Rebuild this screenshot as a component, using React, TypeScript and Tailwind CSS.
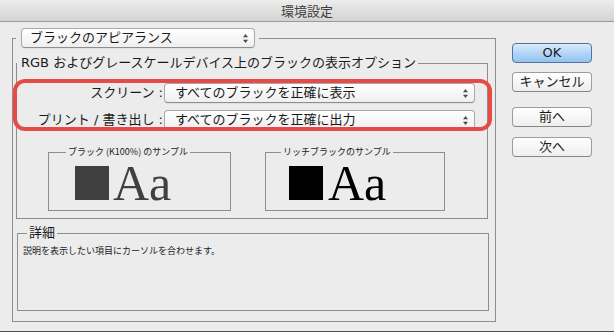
import React from 'react';

function Arrows() {
  return (
    <svg width="7" height="11" viewBox="0 0 7 11" className="shrink-0">
      <path d="M3.5 1 L6 4.2 L1 4.2 Z" fill="#4a4a4a" />
      <path d="M3.5 10 L6 6.8 L1 6.8 Z" fill="#4a4a4a" />
    </svg>
  );
}

function Popup({ label, className }: { label: string; className: string }) {
  return (
    <div
      className={`flex h-[20px] items-center justify-between rounded-[4px] border border-[#a9a9a9] border-b-[#8e8e8e] bg-gradient-to-b from-white to-[#efefef] pr-[5px] text-[13px] leading-[18px] shadow-[0_1px_1px_rgba(0,0,0,0.06)] ${className}`}
    >
      <span>{label}</span>
      <Arrows />
    </div>
  );
}

function Button({ label, primary }: { label: string; primary?: boolean }) {
  return (
    <button
      className={
        primary
          ? 'flex h-[20px] w-[80px] items-center justify-center rounded-[4px] border border-[#56739f] bg-gradient-to-b from-[#dcebfb] via-[#b3d5f6] to-[#92c4f1] text-[13px] leading-[18px]'
          : 'flex h-[20px] w-[80px] items-center justify-center rounded-[4px] border border-[#9d9d9d] border-b-[#868686] bg-gradient-to-b from-white to-[#eeeeee] text-[13px] leading-[18px]'
      }
    >
      {label}
    </button>
  );
}

function Sample({ label, color, width, legendGap, squareGap, textGap }: {
  label: string;
  color: string;
  width: string;
  legendGap: string;
  squareGap: string;
  textGap: string;
}) {
  return (
    <fieldset className={`h-[65px] border border-[#8e8e8e] ${width}`}>
      <legend className={`px-[2px] text-[9px] leading-[12px] font-['Noto_Sans_CJK_JP',sans-serif] ${legendGap}`}>
        {label}
      </legend>
      <div className={`mt-[3px] flex items-baseline ${squareGap}`}>
        <div className={`h-[34px] w-[34px] ${color === 'gray' ? 'bg-[#404040]' : 'bg-black'}`} />
        <span
          className={`font-['Liberation_Serif',serif] text-[50px] leading-[44px] ${textGap} ${color === 'gray' ? 'text-[#404040]' : 'text-black'}`}
        >
          Aa
        </span>
      </div>
    </fieldset>
  );
}

export default function App() {
  return (
    <div className="relative h-[332px] w-[614px] overflow-hidden border-b border-[#4f4f4f] bg-[#ececec] text-[#1a1a1a] font-['DejaVu_Sans','Noto_Sans_CJK_JP',sans-serif]">
      <div className="flex h-[22px] items-center justify-center border-b border-[#9a9a9a] bg-gradient-to-b from-[#ededed] to-[#d3d3d3] text-[13px] text-[#3d3d3d] font-['Noto_Sans_CJK_JP',sans-serif]">
        環境設定
      </div>

      <div className="flex">
        <fieldset className="ml-[12px] mt-[6px] h-[294px] w-[484px] border border-[#8e8e8e] pl-[3px] pt-[6px]">
          <legend className="pl-[5px] pr-[4px]">
            <Popup label="ブラックのアピアランス" className="w-[234px] pl-[8px]" />
          </legend>

          <fieldset className="h-[165px] w-[472px] border border-[#8e8e8e]">
            <legend className="pl-[4px] pr-[2px] text-[13px] leading-[18px]">
              RGB およびグレースケールデバイス上のブラックの表示オプション
            </legend>

            <div className="mt-[11px] flex items-center">
              <span className="w-[146px] text-right text-[13px] leading-[20px]">スクリーン :</span>
              <Popup label="すべてのブラックを正確に表示" className="ml-[1px] w-[311px] pl-[10px]" />
            </div>
            <div className="mt-[7px] flex items-center">
              <span className="w-[146px] text-right text-[13px] leading-[20px]">プリント / 書き出し :</span>
              <Popup label="すべてのブラックを正確に出力" className="ml-[1px] w-[311px] pl-[10px]" />
            </div>

            <div className="ml-[31px] mt-[16px] flex gap-[34px]">
              <Sample
                label="ブラック (K100%) のサンプル"
                color="gray"
                width="w-[183px]"
                legendGap="ml-[17px]"
                squareGap="ml-[26px]"
                textGap="ml-[4px]"
              />
              <Sample
                label="リッチブラックのサンプル"
                color="black"
                width="w-[180px]"
                legendGap="ml-[15px]"
                squareGap="ml-[23px]"
                textGap="ml-[5px]"
              />
            </div>
          </fieldset>

          <fieldset className="ml-[1px] mt-[5px] h-[87px] w-[472px] border border-[#8e8e8e] pl-[4px]">
            <legend className="ml-[5px] px-[2px] text-[13px] leading-[18px]">詳細</legend>
            <p className="ml-[1px] mt-[3px] text-[9px] leading-[12px] font-['Noto_Sans_CJK_JP',sans-serif]">
              説明を表示したい項目にカーソルを合わせます。
            </p>
          </fieldset>
        </fieldset>

        <div className="ml-[16px] mt-[21px] flex flex-col">
          <Button label="OK" primary />
          <div className="mt-[9px]">
            <Button label="キャンセル" />
          </div>
          <div className="mt-[15px]">
            <Button label="前へ" />
          </div>
          <div className="mt-[10px]">
            <Button label="次へ" />
          </div>
        </div>
      </div>

      <div className="pointer-events-none absolute left-[13px] top-[79px] h-[52px] w-[479px] rounded-[12px] border-4 border-[#e64b45]" />
    </div>
  );
}
